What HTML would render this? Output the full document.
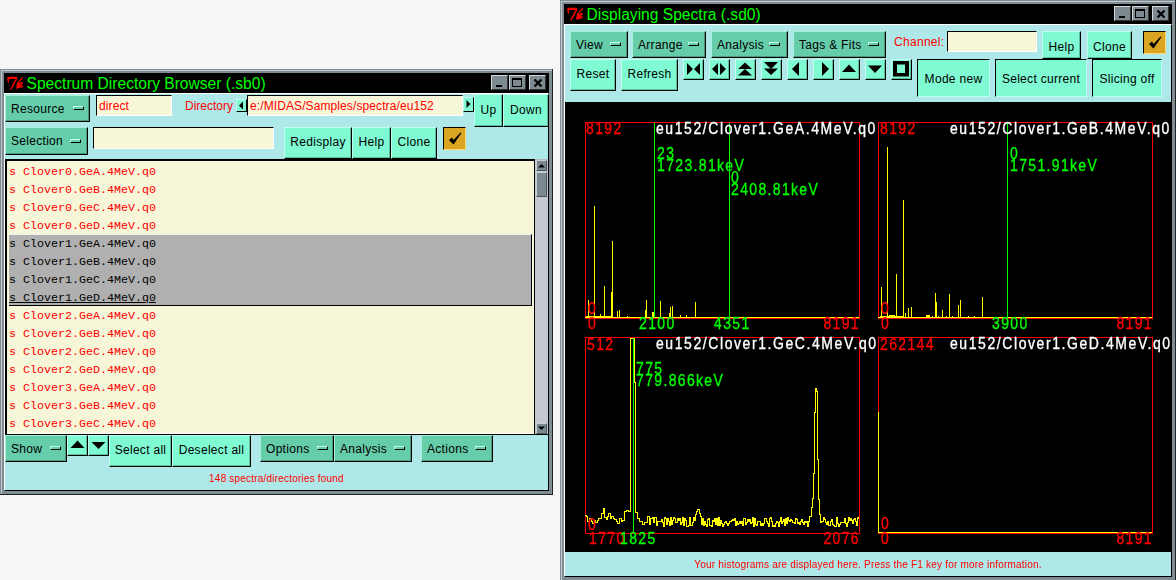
<!DOCTYPE html><html><head><meta charset="utf-8"><style>
html,body{margin:0;padding:0;}
body{width:1176px;height:580px;overflow:hidden;background:#f7f7f7;position:relative;font-family:"Liberation Sans",sans-serif;}
div{position:absolute;}
.t{white-space:nowrap;}
.m{font-family:"Liberation Mono",monospace;}
</style></head><body>
<div style="left:0px;top:69px;width:553px;height:426px;background:#7f8c92;border-right:1px solid #1c2226;border-bottom:1px solid #1c2226;box-sizing:border-box;"></div>
<div style="left:1px;top:70px;width:551px;height:1px;background:#c0cacf"></div>
<div style="left:1px;top:70px;width:1px;height:424px;background:#c0cacf"></div>
<div style="left:4px;top:73px;width:545px;height:20px;background:#000"></div>
<svg style="position:absolute;left:4px;top:73px" width="24" height="18" viewBox="0 0 24 18"><path d="M3.3 5 Q3.5 3.8 5 3.8 L12.2 3.8 Q13.5 4 13.2 5.8 L12.5 7 L11.3 6.5 L11.8 5.9 L6 5.9 Q4.6 6 4.8 8 Q5.5 9.3 4.6 10 Q3.2 9 3.3 5 Z" fill="#f00"/><path d="M11.3 6.6 L12.6 7.2 L7.5 16.5 L6 16.3 Z" fill="#f00"/><path d="M18.3 3.8 L19.2 4.8 L14 10.5 L12.8 10.2 Z" fill="#f00"/><path d="M13 10 L16.5 9.5 Q18 8.5 19 10 Q18.5 11.5 17.5 11.8 Q19 12 19 13.5 Q18.5 15 17 14.8 L15 15 L13 16 L12.2 15 Q12.5 12 13 10 Z" fill="#f00"/><circle cx="17" cy="11.3" r="0.6" fill="#000"/><circle cx="17.3" cy="13.4" r="0.6" fill="#000"/></svg>
<div class="t" style="left:26.5px;top:75px;font-size:15.6px;color:#00ff00;line-height:18px;">Spectrum Directory Browser (.sb0)</div>
<div style="left:491px;top:75px;width:17px;height:15px;background:#7d8a90;border-left:1px solid #d0d8dc;border-top:1px solid #d0d8dc;border-right:1px solid #2e3438;border-bottom:1px solid #2e3438;box-sizing:border-box;"></div>
<div style="left:509px;top:75px;width:17px;height:15px;background:#7d8a90;border-left:1px solid #d0d8dc;border-top:1px solid #d0d8dc;border-right:1px solid #2e3438;border-bottom:1px solid #2e3438;box-sizing:border-box;"></div>
<div style="left:529px;top:75px;width:17px;height:15px;background:#7d8a90;border-left:1px solid #d0d8dc;border-top:1px solid #d0d8dc;border-right:1px solid #2e3438;border-bottom:1px solid #2e3438;box-sizing:border-box;"></div>
<div style="left:496px;top:85px;width:6px;height:2px;background:#000"></div>
<div style="left:512px;top:78px;width:10px;height:9px;border:1.4px solid #000;border-top-width:2.4px;box-sizing:border-box;"></div>
<svg style="position:absolute;left:529px;top:75px" width="17" height="15"><path d="M5.5 4.5 L12.5 11.5 M12.5 4.5 L5.5 11.5" stroke="#000" stroke-width="2.3"/></svg>
<div style="left:4px;top:93px;width:545px;height:398px;background:#aee8e8;border-top:1px solid #fff;border-left:1px solid #fff;border-bottom:1px solid #000;border-right:1px solid #000;box-sizing:border-box;"></div>
<div style="left:5px;top:95px;width:85px;height:27px;background:#66cdaa;border-left:1px solid #a8f0d8;border-top:1px solid #a8f0d8;border-right:1px solid #000;border-bottom:1px solid #000;box-sizing:border-box;box-shadow:inset -1px -1px 0 #4a9a80;"></div>
<div class="t" style="left:11px;top:100.5px;font-size:12px;letter-spacing:0.3px;color:#000;line-height:16px;">Resource</div>
<div style="left:73px;top:106px;width:11px;height:4px;background:#66cdaa;border-left:1px solid #c0ffe8;border-top:1px solid #c0ffe8;border-right:1px solid #000;border-bottom:1px solid #000;box-sizing:border-box;"></div>
<div style="left:96px;top:95px;width:76px;height:21px;background:#f8f6d9;border-left:1px solid #000;border-top:1px solid #000;border-right:1px solid #fff;border-bottom:1px solid #fff;box-sizing:border-box;"></div>
<div class="t" style="left:99px;top:98px;font-size:12px;letter-spacing:0.1px;color:#f00;line-height:16px;">direct</div>
<div class="t" style="left:185px;top:99px;font-size:12px;letter-spacing:0px;color:#f00;line-height:14px;">Directory</div>
<div style="left:236px;top:99px;width:11px;height:13px;background:#7ffad2;border-left:1px solid #c0fff0;border-top:1px solid #c0fff0;border-right:1px solid #000;border-bottom:1px solid #000;box-sizing:border-box;"></div>
<svg style="position:absolute;left:236px;top:99px" width="11" height="13"><path d="M3 6.5 L7 2.5 L7 10.5 Z" fill="#000"/></svg>
<div style="left:247px;top:95px;width:216px;height:21px;background:#f8f6d9;border-left:1px solid #000;border-top:1px solid #000;border-right:1px solid #fff;border-bottom:1px solid #fff;box-sizing:border-box;"></div>
<div class="t" style="left:250px;top:98px;font-size:12px;letter-spacing:0.1px;color:#f00;line-height:16px;">e:/MIDAS/Samples/spectra/eu152</div>
<div style="left:463px;top:97px;width:11px;height:15px;background:#7ffad2;border-left:1px solid #c0fff0;border-top:1px solid #c0fff0;border-right:1px solid #000;border-bottom:1px solid #000;box-sizing:border-box;"></div>
<svg style="position:absolute;left:463px;top:97px" width="11" height="15"><path d="M7.5 7 L3.5 3 L3.5 11 Z" fill="#000"/></svg>
<div style="left:474px;top:94px;width:29px;height:33px;background:#7ffad2;border-left:1px solid #c0fff0;border-top:1px solid #c0fff0;border-right:1px solid #000;border-bottom:1px solid #000;box-sizing:border-box;box-shadow:inset -1px -1px 0 #58c0a0;"></div>
<div class="t" style="left:474px;top:94px;width:29px;height:33px;line-height:32px;text-align:center;font-size:12px;letter-spacing:0.3px;color:#000;">Up</div>
<div style="left:503px;top:94px;width:46px;height:33px;background:#7ffad2;border-left:1px solid #c0fff0;border-top:1px solid #c0fff0;border-right:1px solid #000;border-bottom:1px solid #000;box-sizing:border-box;box-shadow:inset -1px -1px 0 #58c0a0;"></div>
<div class="t" style="left:503px;top:94px;width:46px;height:33px;line-height:32px;text-align:center;font-size:12px;letter-spacing:0.3px;color:#000;">Down</div>
<div style="left:5px;top:127px;width:83px;height:28px;background:#66cdaa;border-left:1px solid #a8f0d8;border-top:1px solid #a8f0d8;border-right:1px solid #000;border-bottom:1px solid #000;box-sizing:border-box;box-shadow:inset -1px -1px 0 #4a9a80;"></div>
<div class="t" style="left:11px;top:132.5px;font-size:12px;letter-spacing:0.3px;color:#000;line-height:16px;">Selection</div>
<div style="left:70px;top:139px;width:11px;height:4px;background:#66cdaa;border-left:1px solid #c0ffe8;border-top:1px solid #c0ffe8;border-right:1px solid #000;border-bottom:1px solid #000;box-sizing:border-box;"></div>
<div style="left:93px;top:127px;width:181px;height:22px;background:#f8f6d9;border-left:1px solid #000;border-top:1px solid #000;border-right:1px solid #fff;border-bottom:1px solid #fff;box-sizing:border-box;"></div>
<div style="left:284px;top:127px;width:68px;height:32px;background:#7ffad2;border-left:1px solid #c0fff0;border-top:1px solid #c0fff0;border-right:1px solid #000;border-bottom:1px solid #000;box-sizing:border-box;box-shadow:inset -1px -1px 0 #58c0a0;"></div>
<div class="t" style="left:284px;top:127px;width:68px;height:32px;line-height:31px;text-align:center;font-size:12px;letter-spacing:0.3px;color:#000;">Redisplay</div>
<div style="left:352px;top:127px;width:39px;height:32px;background:#7ffad2;border-left:1px solid #c0fff0;border-top:1px solid #c0fff0;border-right:1px solid #000;border-bottom:1px solid #000;box-sizing:border-box;box-shadow:inset -1px -1px 0 #58c0a0;"></div>
<div class="t" style="left:352px;top:127px;width:39px;height:32px;line-height:31px;text-align:center;font-size:12px;letter-spacing:0.3px;color:#000;">Help</div>
<div style="left:391px;top:127px;width:46px;height:32px;background:#7ffad2;border-left:1px solid #c0fff0;border-top:1px solid #c0fff0;border-right:1px solid #000;border-bottom:1px solid #000;box-sizing:border-box;box-shadow:inset -1px -1px 0 #58c0a0;"></div>
<div class="t" style="left:391px;top:127px;width:46px;height:32px;line-height:31px;text-align:center;font-size:12px;letter-spacing:0.3px;color:#000;">Clone</div>
<div style="left:443px;top:127px;width:23px;height:23px;background:#daa520;border-left:1px solid #000;border-top:1px solid #000;border-right:1px solid #ffd878;border-bottom:1px solid #ffd878;box-sizing:border-box;"></div>
<svg style="position:absolute;left:443px;top:127px" width="23" height="23"><path d="M6 13 L9 10.5 L10.5 13 L17.5 5.5 L18.5 6 L10.5 17.5 Z" fill="#000"/></svg>
<div style="left:5px;top:159px;width:530px;height:276px;background:#000"></div>
<div style="left:7px;top:161px;width:527px;height:273px;background:#f8f6d9;border-bottom:1px solid #fff;box-sizing:border-box;"></div>
<div style="left:535px;top:434px;width:13px;height:1px;background:#000"></div>
<div style="left:9px;top:234px;width:523px;height:72px;background:#b0b0b0;border-top:1px solid #f0f0f0;border-bottom:1px solid #000;border-right:1px solid #000;box-sizing:border-box;"></div>
<div class="t" style="left:9px;top:164px;font-family:Liberation Mono;font-size:11.67px;color:#f00;line-height:16px;">s Clover0.GeA.4MeV.q0</div>
<div class="t" style="left:9px;top:182px;font-family:Liberation Mono;font-size:11.67px;color:#f00;line-height:16px;">s Clover0.GeB.4MeV.q0</div>
<div class="t" style="left:9px;top:200px;font-family:Liberation Mono;font-size:11.67px;color:#f00;line-height:16px;">s Clover0.GeC.4MeV.q0</div>
<div class="t" style="left:9px;top:218px;font-family:Liberation Mono;font-size:11.67px;color:#f00;line-height:16px;">s Clover0.GeD.4MeV.q0</div>
<div class="t" style="left:9px;top:236px;font-family:Liberation Mono;font-size:11.67px;color:#000;line-height:16px;">s Clover1.GeA.4MeV.q0</div>
<div class="t" style="left:9px;top:254px;font-family:Liberation Mono;font-size:11.67px;color:#000;line-height:16px;">s Clover1.GeB.4MeV.q0</div>
<div class="t" style="left:9px;top:272px;font-family:Liberation Mono;font-size:11.67px;color:#000;line-height:16px;">s Clover1.GeC.4MeV.q0</div>
<div class="t" style="left:9px;top:290px;font-family:Liberation Mono;font-size:11.67px;color:#000;line-height:16px;text-decoration:underline;">s Clover1.GeD.4MeV.q0</div>
<div class="t" style="left:9px;top:308px;font-family:Liberation Mono;font-size:11.67px;color:#f00;line-height:16px;">s Clover2.GeA.4MeV.q0</div>
<div class="t" style="left:9px;top:326px;font-family:Liberation Mono;font-size:11.67px;color:#f00;line-height:16px;">s Clover2.GeB.4MeV.q0</div>
<div class="t" style="left:9px;top:344px;font-family:Liberation Mono;font-size:11.67px;color:#f00;line-height:16px;">s Clover2.GeC.4MeV.q0</div>
<div class="t" style="left:9px;top:362px;font-family:Liberation Mono;font-size:11.67px;color:#f00;line-height:16px;">s Clover2.GeD.4MeV.q0</div>
<div class="t" style="left:9px;top:380px;font-family:Liberation Mono;font-size:11.67px;color:#f00;line-height:16px;">s Clover3.GeA.4MeV.q0</div>
<div class="t" style="left:9px;top:398px;font-family:Liberation Mono;font-size:11.67px;color:#f00;line-height:16px;">s Clover3.GeB.4MeV.q0</div>
<div class="t" style="left:9px;top:416px;font-family:Liberation Mono;font-size:11.67px;color:#f00;line-height:16px;">s Clover3.GeC.4MeV.q0</div>
<div style="left:535px;top:159px;width:13px;height:275px;background:#c4c8cf;border-top:1px solid #b4bcc0;box-sizing:border-box;"></div>
<div style="left:536px;top:160px;width:11px;height:11px;background:#7b8a91;border-left:1px solid #c8d0d4;border-top:1px solid #c8d0d4;border-right:1px solid #4a565c;border-bottom:1px solid #4a565c;box-sizing:border-box;"></div>
<svg style="position:absolute;left:536px;top:160px" width="11" height="11"><path d="M2 7.5 L5.5 4 L9 7.5 Z" fill="#000"/></svg>
<div style="left:536px;top:172px;width:11px;height:25px;background:#7b8a91;border-left:1px solid #c8d0d4;border-top:1px solid #c8d0d4;border-right:1px solid #4a565c;border-bottom:1px solid #4a565c;box-sizing:border-box;"></div>
<div style="left:536px;top:423px;width:11px;height:11px;background:#7b8a91;border-left:1px solid #c8d0d4;border-top:1px solid #c8d0d4;border-right:1px solid #4a565c;border-bottom:1px solid #4a565c;box-sizing:border-box;"></div>
<svg style="position:absolute;left:536px;top:423px" width="11" height="11"><path d="M2 3.5 L5.5 7 L9 3.5 Z" fill="#000"/></svg>
<div style="left:5px;top:435px;width:62px;height:27px;background:#66cdaa;border-left:1px solid #a8f0d8;border-top:1px solid #a8f0d8;border-right:1px solid #000;border-bottom:1px solid #000;box-sizing:border-box;box-shadow:inset -1px -1px 0 #4a9a80;"></div>
<div class="t" style="left:11px;top:440.5px;font-size:12px;letter-spacing:0.3px;color:#000;line-height:16px;">Show</div>
<div style="left:50px;top:446px;width:11px;height:4px;background:#66cdaa;border-left:1px solid #c0ffe8;border-top:1px solid #c0ffe8;border-right:1px solid #000;border-bottom:1px solid #000;box-sizing:border-box;"></div>
<div style="left:67px;top:435px;width:21px;height:21px;background:#7ffad2;border-left:1px solid #c0fff0;border-top:1px solid #c0fff0;border-right:1px solid #000;border-bottom:1px solid #000;box-sizing:border-box;box-shadow:inset -1px -1px 0 #58c0a0;"></div>
<svg style="position:absolute;left:67px;top:435px" width="21" height="21"><path d="M3.5 13 L10.5 5.5 L17.5 13 Z" fill="#000"/></svg>
<div style="left:88px;top:435px;width:21px;height:21px;background:#7ffad2;border-left:1px solid #c0fff0;border-top:1px solid #c0fff0;border-right:1px solid #000;border-bottom:1px solid #000;box-sizing:border-box;box-shadow:inset -1px -1px 0 #58c0a0;"></div>
<svg style="position:absolute;left:88px;top:435px" width="21" height="21"><path d="M3.5 7 L10.5 14 L17.5 7 Z" fill="#000"/></svg>
<div style="left:109px;top:435px;width:63px;height:32px;background:#7ffad2;border-left:1px solid #c0fff0;border-top:1px solid #c0fff0;border-right:1px solid #000;border-bottom:1px solid #000;box-sizing:border-box;box-shadow:inset -1px -1px 0 #58c0a0;"></div>
<div class="t" style="left:109px;top:435px;width:63px;height:32px;line-height:31px;text-align:center;font-size:12px;letter-spacing:0.3px;color:#000;">Select all</div>
<div style="left:172px;top:435px;width:79px;height:32px;background:#7ffad2;border-left:1px solid #c0fff0;border-top:1px solid #c0fff0;border-right:1px solid #000;border-bottom:1px solid #000;box-sizing:border-box;box-shadow:inset -1px -1px 0 #58c0a0;"></div>
<div class="t" style="left:172px;top:435px;width:79px;height:32px;line-height:31px;text-align:center;font-size:12px;letter-spacing:0.3px;color:#000;">Deselect all</div>
<div style="left:260px;top:435px;width:74px;height:27px;background:#66cdaa;border-left:1px solid #a8f0d8;border-top:1px solid #a8f0d8;border-right:1px solid #000;border-bottom:1px solid #000;box-sizing:border-box;box-shadow:inset -1px -1px 0 #4a9a80;"></div>
<div class="t" style="left:266px;top:440.5px;font-size:12px;letter-spacing:0.3px;color:#000;line-height:16px;">Options</div>
<div style="left:317px;top:446px;width:11px;height:4px;background:#66cdaa;border-left:1px solid #c0ffe8;border-top:1px solid #c0ffe8;border-right:1px solid #000;border-bottom:1px solid #000;box-sizing:border-box;"></div>
<div style="left:334px;top:435px;width:78px;height:27px;background:#66cdaa;border-left:1px solid #a8f0d8;border-top:1px solid #a8f0d8;border-right:1px solid #000;border-bottom:1px solid #000;box-sizing:border-box;box-shadow:inset -1px -1px 0 #4a9a80;"></div>
<div class="t" style="left:340px;top:440.5px;font-size:12px;letter-spacing:0.3px;color:#000;line-height:16px;">Analysis</div>
<div style="left:394px;top:446px;width:11px;height:4px;background:#66cdaa;border-left:1px solid #c0ffe8;border-top:1px solid #c0ffe8;border-right:1px solid #000;border-bottom:1px solid #000;box-sizing:border-box;"></div>
<div style="left:421px;top:435px;width:72px;height:27px;background:#66cdaa;border-left:1px solid #a8f0d8;border-top:1px solid #a8f0d8;border-right:1px solid #000;border-bottom:1px solid #000;box-sizing:border-box;box-shadow:inset -1px -1px 0 #4a9a80;"></div>
<div class="t" style="left:427px;top:440.5px;font-size:12px;letter-spacing:0.3px;color:#000;line-height:16px;">Actions</div>
<div style="left:475px;top:446px;width:11px;height:4px;background:#66cdaa;border-left:1px solid #c0ffe8;border-top:1px solid #c0ffe8;border-right:1px solid #000;border-bottom:1px solid #000;box-sizing:border-box;"></div>
<div class="t" style="left:4px;top:472px;width:545px;text-align:center;font-size:10px;color:#f00;letter-spacing:0.2px;line-height:14px;">148 spectra/directories found</div>
<div style="left:560px;top:0px;width:616px;height:581px;background:#7f8c92;border-right:1px solid #1c2226;border-bottom:1px solid #1c2226;box-sizing:border-box;"></div>
<div style="left:561px;top:1px;width:614px;height:1px;background:#c0cacf"></div>
<div style="left:561px;top:1px;width:1px;height:579px;background:#c0cacf"></div>
<div style="left:564px;top:4px;width:608px;height:20px;background:#000"></div>
<svg style="position:absolute;left:564px;top:4px" width="24" height="18" viewBox="0 0 24 18"><path d="M3.3 5 Q3.5 3.8 5 3.8 L12.2 3.8 Q13.5 4 13.2 5.8 L12.5 7 L11.3 6.5 L11.8 5.9 L6 5.9 Q4.6 6 4.8 8 Q5.5 9.3 4.6 10 Q3.2 9 3.3 5 Z" fill="#f00"/><path d="M11.3 6.6 L12.6 7.2 L7.5 16.5 L6 16.3 Z" fill="#f00"/><path d="M18.3 3.8 L19.2 4.8 L14 10.5 L12.8 10.2 Z" fill="#f00"/><path d="M13 10 L16.5 9.5 Q18 8.5 19 10 Q18.5 11.5 17.5 11.8 Q19 12 19 13.5 Q18.5 15 17 14.8 L15 15 L13 16 L12.2 15 Q12.5 12 13 10 Z" fill="#f00"/><circle cx="17" cy="11.3" r="0.6" fill="#000"/><circle cx="17.3" cy="13.4" r="0.6" fill="#000"/></svg>
<div class="t" style="left:586.5px;top:6px;font-size:15.6px;color:#00ff00;line-height:18px;">Displaying Spectra (.sd0)</div>
<div style="left:1114px;top:6px;width:17px;height:15px;background:#7d8a90;border-left:1px solid #d0d8dc;border-top:1px solid #d0d8dc;border-right:1px solid #2e3438;border-bottom:1px solid #2e3438;box-sizing:border-box;"></div>
<div style="left:1132px;top:6px;width:17px;height:15px;background:#7d8a90;border-left:1px solid #d0d8dc;border-top:1px solid #d0d8dc;border-right:1px solid #2e3438;border-bottom:1px solid #2e3438;box-sizing:border-box;"></div>
<div style="left:1152px;top:6px;width:17px;height:15px;background:#7d8a90;border-left:1px solid #d0d8dc;border-top:1px solid #d0d8dc;border-right:1px solid #2e3438;border-bottom:1px solid #2e3438;box-sizing:border-box;"></div>
<div style="left:1119px;top:16px;width:6px;height:2px;background:#000"></div>
<div style="left:1135px;top:9px;width:10px;height:9px;border:1.4px solid #000;border-top-width:2.4px;box-sizing:border-box;"></div>
<svg style="position:absolute;left:1152px;top:6px" width="17" height="15"><path d="M5.5 4.5 L12.5 11.5 M12.5 4.5 L5.5 11.5" stroke="#000" stroke-width="2.3"/></svg>
<div style="left:564px;top:24px;width:608px;height:553px;background:#aee8e8;border-top:1px solid #fff;border-left:1px solid #fff;border-bottom:1px solid #000;border-right:1px solid #000;box-sizing:border-box;"></div>
<div style="left:570px;top:31px;width:58px;height:27px;background:#66cdaa;border-left:1px solid #a8f0d8;border-top:1px solid #a8f0d8;border-right:1px solid #000;border-bottom:1px solid #000;box-sizing:border-box;box-shadow:inset -1px -1px 0 #4a9a80;"></div>
<div class="t" style="left:576px;top:36.5px;font-size:12px;letter-spacing:0.3px;color:#000;line-height:16px;">View</div>
<div style="left:610px;top:42px;width:11px;height:4px;background:#66cdaa;border-left:1px solid #c0ffe8;border-top:1px solid #c0ffe8;border-right:1px solid #000;border-bottom:1px solid #000;box-sizing:border-box;"></div>
<div style="left:632px;top:31px;width:74px;height:27px;background:#66cdaa;border-left:1px solid #a8f0d8;border-top:1px solid #a8f0d8;border-right:1px solid #000;border-bottom:1px solid #000;box-sizing:border-box;box-shadow:inset -1px -1px 0 #4a9a80;"></div>
<div class="t" style="left:638px;top:36.5px;font-size:12px;letter-spacing:0.3px;color:#000;line-height:16px;">Arrange</div>
<div style="left:688px;top:42px;width:11px;height:4px;background:#66cdaa;border-left:1px solid #c0ffe8;border-top:1px solid #c0ffe8;border-right:1px solid #000;border-bottom:1px solid #000;box-sizing:border-box;"></div>
<div style="left:711px;top:31px;width:77px;height:27px;background:#66cdaa;border-left:1px solid #a8f0d8;border-top:1px solid #a8f0d8;border-right:1px solid #000;border-bottom:1px solid #000;box-sizing:border-box;box-shadow:inset -1px -1px 0 #4a9a80;"></div>
<div class="t" style="left:717px;top:36.5px;font-size:12px;letter-spacing:0.3px;color:#000;line-height:16px;">Analysis</div>
<div style="left:769px;top:42px;width:11px;height:4px;background:#66cdaa;border-left:1px solid #c0ffe8;border-top:1px solid #c0ffe8;border-right:1px solid #000;border-bottom:1px solid #000;box-sizing:border-box;"></div>
<div style="left:793px;top:31px;width:93px;height:27px;background:#66cdaa;border-left:1px solid #a8f0d8;border-top:1px solid #a8f0d8;border-right:1px solid #000;border-bottom:1px solid #000;box-sizing:border-box;box-shadow:inset -1px -1px 0 #4a9a80;"></div>
<div class="t" style="left:799px;top:36.5px;font-size:12px;letter-spacing:0.3px;color:#000;line-height:16px;">Tags &amp; Fits</div>
<div style="left:868px;top:42px;width:11px;height:4px;background:#66cdaa;border-left:1px solid #c0ffe8;border-top:1px solid #c0ffe8;border-right:1px solid #000;border-bottom:1px solid #000;box-sizing:border-box;"></div>
<div class="t" style="left:894px;top:34px;font-size:12px;letter-spacing:0.3px;color:#f00;line-height:16px;">Channel:</div>
<div style="left:947px;top:31px;width:90px;height:21px;background:#f8f6d9;border-left:1px solid #000;border-top:1px solid #000;border-right:1px solid #fff;border-bottom:1px solid #fff;box-sizing:border-box;"></div>
<div style="left:1042px;top:31px;width:39px;height:28px;background:#7ffad2;border-left:1px solid #c0fff0;border-top:1px solid #c0fff0;border-right:1px solid #000;border-bottom:1px solid #000;box-sizing:border-box;box-shadow:inset -1px -1px 0 #58c0a0;"></div>
<div class="t" style="left:1042px;top:34px;width:39px;height:28px;line-height:27px;text-align:center;font-size:12px;letter-spacing:0.3px;color:#000;">Help</div>
<div style="left:1087px;top:31px;width:45px;height:28px;background:#7ffad2;border-left:1px solid #c0fff0;border-top:1px solid #c0fff0;border-right:1px solid #000;border-bottom:1px solid #000;box-sizing:border-box;box-shadow:inset -1px -1px 0 #58c0a0;"></div>
<div class="t" style="left:1087px;top:34px;width:45px;height:28px;line-height:27px;text-align:center;font-size:12px;letter-spacing:0.3px;color:#000;">Clone</div>
<div style="left:1143px;top:31px;width:23px;height:23px;background:#daa520;border-left:1px solid #000;border-top:1px solid #000;border-right:1px solid #ffd878;border-bottom:1px solid #ffd878;box-sizing:border-box;"></div>
<svg style="position:absolute;left:1143px;top:31px" width="23" height="23"><path d="M6 13 L9 10.5 L10.5 13 L17.5 5.5 L18.5 6 L10.5 17.5 Z" fill="#000"/></svg>
<div style="left:570px;top:59px;width:46px;height:32px;background:#7ffad2;border-left:1px solid #c0fff0;border-top:1px solid #c0fff0;border-right:1px solid #000;border-bottom:1px solid #000;box-sizing:border-box;box-shadow:inset -1px -1px 0 #58c0a0;"></div>
<div class="t" style="left:570px;top:59px;width:46px;height:32px;line-height:31px;text-align:center;font-size:12px;letter-spacing:0.3px;color:#000;">Reset</div>
<div style="left:621px;top:59px;width:57px;height:32px;background:#7ffad2;border-left:1px solid #c0fff0;border-top:1px solid #c0fff0;border-right:1px solid #000;border-bottom:1px solid #000;box-sizing:border-box;box-shadow:inset -1px -1px 0 #58c0a0;"></div>
<div class="t" style="left:621px;top:59px;width:57px;height:32px;line-height:31px;text-align:center;font-size:12px;letter-spacing:0.3px;color:#000;">Refresh</div>
<div style="left:683px;top:59px;width:21px;height:21px;background:#7ffad2;border-left:1px solid #c0fff0;border-top:1px solid #c0fff0;border-right:1px solid #000;border-bottom:1px solid #000;box-sizing:border-box;box-shadow:inset -1px -1px 0 #58c0a0;"></div>
<svg style="position:absolute;left:683px;top:59px" width="21" height="21"><path d="M4 4 L10 10 L4 16 Z M17 4 L11 10 L17 16 Z" fill="#000" fill-rule="evenodd"/></svg>
<div style="left:709px;top:59px;width:21px;height:21px;background:#7ffad2;border-left:1px solid #c0fff0;border-top:1px solid #c0fff0;border-right:1px solid #000;border-bottom:1px solid #000;box-sizing:border-box;box-shadow:inset -1px -1px 0 #58c0a0;"></div>
<svg style="position:absolute;left:709px;top:59px" width="21" height="21"><path d="M3 10 L9 4 L9 16 Z M11 4 L17 10 L11 16 Z" fill="#000" fill-rule="evenodd"/></svg>
<div style="left:735px;top:59px;width:21px;height:21px;background:#7ffad2;border-left:1px solid #c0fff0;border-top:1px solid #c0fff0;border-right:1px solid #000;border-bottom:1px solid #000;box-sizing:border-box;box-shadow:inset -1px -1px 0 #58c0a0;"></div>
<svg style="position:absolute;left:735px;top:59px" width="21" height="21"><path d="M3 10 L10 3.5 L17 10 Z M3 16.5 L10 10 L17 16.5 Z" fill="#000" fill-rule="evenodd"/></svg>
<div style="left:761px;top:59px;width:21px;height:21px;background:#7ffad2;border-left:1px solid #c0fff0;border-top:1px solid #c0fff0;border-right:1px solid #000;border-bottom:1px solid #000;box-sizing:border-box;box-shadow:inset -1px -1px 0 #58c0a0;"></div>
<svg style="position:absolute;left:761px;top:59px" width="21" height="21"><path d="M3 3 L17 3 L10 10 Z M3 9.5 L17 9.5 L10 16 Z" fill="#000" fill-rule="evenodd"/></svg>
<div style="left:787px;top:59px;width:21px;height:21px;background:#7ffad2;border-left:1px solid #c0fff0;border-top:1px solid #c0fff0;border-right:1px solid #000;border-bottom:1px solid #000;box-sizing:border-box;box-shadow:inset -1px -1px 0 #58c0a0;"></div>
<svg style="position:absolute;left:787px;top:59px" width="21" height="21"><path d="M5 10 L12 3 L12 17 Z" fill="#000" fill-rule="evenodd"/></svg>
<div style="left:813px;top:59px;width:21px;height:21px;background:#7ffad2;border-left:1px solid #c0fff0;border-top:1px solid #c0fff0;border-right:1px solid #000;border-bottom:1px solid #000;box-sizing:border-box;box-shadow:inset -1px -1px 0 #58c0a0;"></div>
<svg style="position:absolute;left:813px;top:59px" width="21" height="21"><path d="M9 3 L16 10 L9 17 Z" fill="#000" fill-rule="evenodd"/></svg>
<div style="left:839px;top:59px;width:21px;height:21px;background:#7ffad2;border-left:1px solid #c0fff0;border-top:1px solid #c0fff0;border-right:1px solid #000;border-bottom:1px solid #000;box-sizing:border-box;box-shadow:inset -1px -1px 0 #58c0a0;"></div>
<svg style="position:absolute;left:839px;top:59px" width="21" height="21"><path d="M3 13 L10 5.5 L17 13 Z" fill="#000" fill-rule="evenodd"/></svg>
<div style="left:865px;top:59px;width:21px;height:21px;background:#7ffad2;border-left:1px solid #c0fff0;border-top:1px solid #c0fff0;border-right:1px solid #000;border-bottom:1px solid #000;box-sizing:border-box;box-shadow:inset -1px -1px 0 #58c0a0;"></div>
<svg style="position:absolute;left:865px;top:59px" width="21" height="21"><path d="M3 6.5 L17 6.5 L10 14 Z" fill="#000" fill-rule="evenodd"/></svg>
<div style="left:891px;top:59px;width:21px;height:21px;background:#7ffad2;border-left:1px solid #c0fff0;border-top:1px solid #c0fff0;border-right:1px solid #000;border-bottom:1px solid #000;box-sizing:border-box;box-shadow:inset -1px -1px 0 #58c0a0;"></div>
<svg style="position:absolute;left:891px;top:59px" width="21" height="21"><path d="M2 2 L18 2 L18 17.5 L2 17.5 Z M6 5.5 L6 14 L14 14 L14 5.5 Z" fill="#000" fill-rule="evenodd"/></svg>
<div style="left:917px;top:59px;width:73px;height:38px;background:#7ffad2;border-left:1px solid #000;border-top:1px solid #000;border-right:1px solid #c0fff0;border-bottom:1px solid #c0fff0;box-sizing:border-box;"></div>
<div class="t" style="left:917px;top:59px;width:73px;height:38px;line-height:40px;text-align:center;font-size:12px;letter-spacing:0.3px;color:#000;">Mode new</div>
<div style="left:995px;top:59px;width:92px;height:38px;background:#7ffad2;border-left:1px solid #000;border-top:1px solid #000;border-right:1px solid #c0fff0;border-bottom:1px solid #c0fff0;box-sizing:border-box;"></div>
<div class="t" style="left:995px;top:59px;width:92px;height:38px;line-height:40px;text-align:center;font-size:12px;letter-spacing:0.3px;color:#000;">Select current</div>
<div style="left:1092px;top:59px;width:70px;height:38px;background:#7ffad2;border-left:1px solid #000;border-top:1px solid #000;border-right:1px solid #c0fff0;border-bottom:1px solid #c0fff0;box-sizing:border-box;"></div>
<div class="t" style="left:1092px;top:59px;width:70px;height:38px;line-height:40px;text-align:center;font-size:12px;letter-spacing:0.3px;color:#000;">Slicing off</div>
<div style="left:565px;top:102px;width:607px;height:450px;background:#000"></div>
<svg style="position:absolute;left:0;top:0;will-change:transform" width="1176" height="580"><style>.d{font-family:"Liberation Sans";font-size:14px;letter-spacing:1.35px;stroke-width:0.3px;} .ti{font-family:"Liberation Sans";font-size:14px;letter-spacing:1.58px;stroke:#fff;stroke-width:0.3px;}</style>
<rect x="585" y="122" width="275" height="1" fill="#ff0000"/>
<rect x="585" y="318" width="275" height="1" fill="#ff0000"/>
<rect x="585" y="122" width="1" height="197" fill="#ff0000"/>
<rect x="859" y="122" width="1" height="197" fill="#ff0000"/>
<rect x="585" y="317" width="274" height="1" fill="#ffff00"/>
<rect x="586" y="316" width="27" height="1" fill="#ffff00"/>
<rect x="588" y="300" width="1" height="18" fill="#ffff00"/>
<rect x="594" y="206" width="1" height="112" fill="#ffff00"/>
<rect x="604" y="286" width="1" height="32" fill="#ffff00"/>
<rect x="611" y="292" width="1" height="26" fill="#ffff00"/>
<rect x="612" y="241" width="1" height="77" fill="#ffff00"/>
<rect x="617" y="311" width="1" height="7" fill="#ffff00"/>
<rect x="619" y="310" width="1" height="8" fill="#ffff00"/>
<rect x="645" y="310" width="1" height="8" fill="#ffff00"/>
<rect x="646" y="300" width="1" height="18" fill="#ffff00"/>
<rect x="652" y="312" width="1" height="6" fill="#ffff00"/>
<rect x="653" y="312" width="1" height="6" fill="#ffff00"/>
<rect x="660" y="301" width="1" height="17" fill="#ffff00"/>
<rect x="669" y="313" width="1" height="5" fill="#ffff00"/>
<rect x="670" y="307" width="1" height="11" fill="#ffff00"/>
<rect x="672" y="306" width="1" height="12" fill="#ffff00"/>
<rect x="695" y="302" width="1" height="16" fill="#ffff00"/>
<rect x="600" y="314" width="1" height="4" fill="#ffff00"/>
<rect x="680" y="315" width="1" height="3" fill="#ffff00"/>
<rect x="686" y="315" width="1" height="3" fill="#ffff00"/>
<rect x="627" y="316" width="1" height="2" fill="#ffff00"/>
<rect x="654" y="123" width="1" height="195" fill="#00ff00"/>
<rect x="729" y="123" width="1" height="195" fill="#00ff00"/>
<text transform="translate(586,134) scale(1,1.2)" fill="#ff0000" stroke="#ff0000" class="d" text-anchor="start">8192</text>
<text transform="translate(656,134) scale(1,1.14)" fill="#fff" class="ti">eu152/Clover1.GeA.4MeV.q0</text>
<text transform="translate(657,159) scale(1,1.2)" fill="#00ff00" stroke="#00ff00" class="d" text-anchor="start">23</text>
<text transform="translate(657,171) scale(1,1.2)" fill="#00ff00" stroke="#00ff00" class="d" text-anchor="start">1723.81keV</text>
<text transform="translate(731,183) scale(1,1.2)" fill="#00ff00" stroke="#00ff00" class="d" text-anchor="start">0</text>
<text transform="translate(731,195) scale(1,1.2)" fill="#00ff00" stroke="#00ff00" class="d" text-anchor="start">2408.81keV</text>
<text transform="translate(588,314) scale(1,1.2)" fill="#ff0000" stroke="#ff0000" class="d" text-anchor="start">0</text>
<text transform="translate(588,329) scale(1,1.2)" fill="#ff0000" stroke="#ff0000" class="d" text-anchor="start">0</text>
<text transform="translate(639,329) scale(1,1.2)" fill="#00ff00" stroke="#00ff00" class="d" text-anchor="start">2100</text>
<text transform="translate(714,329) scale(1,1.2)" fill="#00ff00" stroke="#00ff00" class="d" text-anchor="start">4351</text>
<text transform="translate(860,329) scale(1,1.2)" fill="#ff0000" stroke="#ff0000" class="d" text-anchor="end">8191</text>
<rect x="878" y="122" width="275" height="1" fill="#ff0000"/>
<rect x="878" y="318" width="275" height="1" fill="#ff0000"/>
<rect x="878" y="122" width="1" height="197" fill="#ff0000"/>
<rect x="1152" y="122" width="1" height="197" fill="#ff0000"/>
<rect x="878" y="317" width="274" height="1" fill="#ffff00"/>
<rect x="880" y="316" width="24" height="1" fill="#ffff00"/>
<rect x="889" y="315" width="6" height="1" fill="#ffff00"/>
<rect x="881" y="287" width="1" height="31" fill="#ffff00"/>
<rect x="887" y="147" width="1" height="171" fill="#ffff00"/>
<rect x="896" y="274" width="1" height="44" fill="#ffff00"/>
<rect x="903" y="200" width="1" height="118" fill="#ffff00"/>
<rect x="905" y="313" width="1" height="5" fill="#ffff00"/>
<rect x="908" y="308" width="1" height="10" fill="#ffff00"/>
<rect x="911" y="307" width="1" height="11" fill="#ffff00"/>
<rect x="935" y="293" width="1" height="25" fill="#ffff00"/>
<rect x="936" y="302" width="1" height="16" fill="#ffff00"/>
<rect x="942" y="310" width="1" height="8" fill="#ffff00"/>
<rect x="949" y="294" width="1" height="24" fill="#ffff00"/>
<rect x="958" y="305" width="1" height="13" fill="#ffff00"/>
<rect x="960" y="300" width="1" height="18" fill="#ffff00"/>
<rect x="982" y="297" width="1" height="21" fill="#ffff00"/>
<rect x="926" y="315" width="1" height="3" fill="#ffff00"/>
<rect x="927" y="315" width="1" height="3" fill="#ffff00"/>
<rect x="928" y="315" width="1" height="3" fill="#ffff00"/>
<rect x="929" y="315" width="1" height="3" fill="#ffff00"/>
<rect x="932" y="316" width="1" height="2" fill="#ffff00"/>
<rect x="938" y="316" width="1" height="2" fill="#ffff00"/>
<rect x="946" y="316" width="1" height="2" fill="#ffff00"/>
<rect x="952" y="316" width="1" height="2" fill="#ffff00"/>
<rect x="968" y="316" width="1" height="2" fill="#ffff00"/>
<rect x="974" y="316" width="1" height="2" fill="#ffff00"/>
<rect x="1007" y="123" width="1" height="195" fill="#00ff00"/>
<text transform="translate(880,134) scale(1,1.2)" fill="#ff0000" stroke="#ff0000" class="d" text-anchor="start">8192</text>
<text transform="translate(950,134) scale(1,1.14)" fill="#fff" class="ti">eu152/Clover1.GeB.4MeV.q0</text>
<text transform="translate(1010,159) scale(1,1.2)" fill="#00ff00" stroke="#00ff00" class="d" text-anchor="start">0</text>
<text transform="translate(1010,171) scale(1,1.2)" fill="#00ff00" stroke="#00ff00" class="d" text-anchor="start">1751.91keV</text>
<text transform="translate(881,314) scale(1,1.2)" fill="#ff0000" stroke="#ff0000" class="d" text-anchor="start">0</text>
<text transform="translate(881,329) scale(1,1.2)" fill="#ff0000" stroke="#ff0000" class="d" text-anchor="start">0</text>
<text transform="translate(992,329) scale(1,1.2)" fill="#00ff00" stroke="#00ff00" class="d" text-anchor="start">3900</text>
<text transform="translate(1153,329) scale(1,1.2)" fill="#ff0000" stroke="#ff0000" class="d" text-anchor="end">8191</text>
<rect x="585" y="337" width="275" height="1" fill="#ff0000"/>
<rect x="585" y="533" width="275" height="1" fill="#ff0000"/>
<rect x="585" y="337" width="1" height="197" fill="#ff0000"/>
<rect x="859" y="337" width="1" height="197" fill="#ff0000"/>
<rect x="585" y="515" width="1" height="1" fill="#ffff00"/>
<rect x="586" y="515" width="1" height="2" fill="#ffff00"/>
<rect x="587" y="516" width="1" height="6" fill="#ffff00"/>
<rect x="588" y="521" width="1" height="1" fill="#ffff00"/>
<rect x="589" y="518" width="1" height="4" fill="#ffff00"/>
<rect x="590" y="518" width="1" height="1" fill="#ffff00"/>
<rect x="591" y="518" width="1" height="4" fill="#ffff00"/>
<rect x="592" y="521" width="1" height="3" fill="#ffff00"/>
<rect x="593" y="523" width="1" height="1" fill="#ffff00"/>
<rect x="594" y="520" width="1" height="4" fill="#ffff00"/>
<rect x="595" y="520" width="1" height="3" fill="#ffff00"/>
<rect x="596" y="522" width="1" height="1" fill="#ffff00"/>
<rect x="597" y="520" width="1" height="3" fill="#ffff00"/>
<rect x="598" y="518" width="1" height="3" fill="#ffff00"/>
<rect x="599" y="518" width="1" height="1" fill="#ffff00"/>
<rect x="600" y="518" width="1" height="1" fill="#ffff00"/>
<rect x="601" y="513" width="1" height="6" fill="#ffff00"/>
<rect x="602" y="513" width="1" height="1" fill="#ffff00"/>
<rect x="603" y="508" width="1" height="6" fill="#ffff00"/>
<rect x="604" y="508" width="1" height="10" fill="#ffff00"/>
<rect x="605" y="517" width="1" height="1" fill="#ffff00"/>
<rect x="606" y="517" width="1" height="3" fill="#ffff00"/>
<rect x="607" y="516" width="1" height="4" fill="#ffff00"/>
<rect x="608" y="513" width="1" height="4" fill="#ffff00"/>
<rect x="609" y="513" width="1" height="1" fill="#ffff00"/>
<rect x="610" y="513" width="1" height="6" fill="#ffff00"/>
<rect x="611" y="516" width="1" height="3" fill="#ffff00"/>
<rect x="612" y="516" width="1" height="1" fill="#ffff00"/>
<rect x="613" y="516" width="1" height="3" fill="#ffff00"/>
<rect x="614" y="518" width="1" height="2" fill="#ffff00"/>
<rect x="615" y="519" width="1" height="1" fill="#ffff00"/>
<rect x="616" y="519" width="1" height="3" fill="#ffff00"/>
<rect x="617" y="521" width="1" height="3" fill="#ffff00"/>
<rect x="618" y="523" width="1" height="1" fill="#ffff00"/>
<rect x="619" y="518" width="1" height="6" fill="#ffff00"/>
<rect x="620" y="518" width="1" height="1" fill="#ffff00"/>
<rect x="621" y="518" width="1" height="4" fill="#ffff00"/>
<rect x="622" y="520" width="1" height="2" fill="#ffff00"/>
<rect x="623" y="520" width="1" height="1" fill="#ffff00"/>
<rect x="624" y="511" width="1" height="10" fill="#ffff00"/>
<rect x="625" y="511" width="1" height="1" fill="#ffff00"/>
<rect x="626" y="510" width="1" height="2" fill="#ffff00"/>
<rect x="627" y="510" width="1" height="1" fill="#ffff00"/>
<rect x="628" y="510" width="1" height="2" fill="#ffff00"/>
<rect x="629" y="511" width="1" height="1" fill="#ffff00"/>
<rect x="630" y="338" width="1" height="174" fill="#ffff00"/>
<rect x="631" y="338" width="1" height="1" fill="#ffff00"/>
<rect x="632" y="338" width="1" height="1" fill="#ffff00"/>
<rect x="633" y="338" width="1" height="1" fill="#ffff00"/>
<rect x="634" y="338" width="1" height="45" fill="#ffff00"/>
<rect x="635" y="382" width="1" height="131" fill="#ffff00"/>
<rect x="636" y="512" width="1" height="1" fill="#ffff00"/>
<rect x="637" y="512" width="1" height="7" fill="#ffff00"/>
<rect x="638" y="518" width="1" height="1" fill="#ffff00"/>
<rect x="639" y="518" width="1" height="4" fill="#ffff00"/>
<rect x="640" y="521" width="1" height="1" fill="#ffff00"/>
<rect x="641" y="521" width="1" height="1" fill="#ffff00"/>
<rect x="642" y="521" width="1" height="4" fill="#ffff00"/>
<rect x="643" y="524" width="1" height="1" fill="#ffff00"/>
<rect x="644" y="522" width="1" height="3" fill="#ffff00"/>
<rect x="645" y="522" width="1" height="1" fill="#ffff00"/>
<rect x="646" y="522" width="1" height="1" fill="#ffff00"/>
<rect x="647" y="516" width="1" height="7" fill="#ffff00"/>
<rect x="648" y="516" width="1" height="1" fill="#ffff00"/>
<rect x="649" y="516" width="1" height="9" fill="#ffff00"/>
<rect x="650" y="518" width="1" height="7" fill="#ffff00"/>
<rect x="651" y="518" width="1" height="1" fill="#ffff00"/>
<rect x="652" y="517" width="1" height="2" fill="#ffff00"/>
<rect x="653" y="517" width="1" height="6" fill="#ffff00"/>
<rect x="654" y="517" width="1" height="6" fill="#ffff00"/>
<rect x="655" y="517" width="1" height="1" fill="#ffff00"/>
<rect x="656" y="517" width="1" height="9" fill="#ffff00"/>
<rect x="657" y="521" width="1" height="5" fill="#ffff00"/>
<rect x="658" y="521" width="1" height="1" fill="#ffff00"/>
<rect x="659" y="521" width="1" height="1" fill="#ffff00"/>
<rect x="660" y="521" width="1" height="1" fill="#ffff00"/>
<rect x="661" y="519" width="1" height="3" fill="#ffff00"/>
<rect x="662" y="519" width="1" height="4" fill="#ffff00"/>
<rect x="663" y="522" width="1" height="5" fill="#ffff00"/>
<rect x="664" y="517" width="1" height="10" fill="#ffff00"/>
<rect x="665" y="517" width="1" height="2" fill="#ffff00"/>
<rect x="666" y="518" width="1" height="7" fill="#ffff00"/>
<rect x="667" y="518" width="1" height="7" fill="#ffff00"/>
<rect x="668" y="518" width="1" height="4" fill="#ffff00"/>
<rect x="669" y="521" width="1" height="5" fill="#ffff00"/>
<rect x="670" y="517" width="1" height="9" fill="#ffff00"/>
<rect x="671" y="517" width="1" height="8" fill="#ffff00"/>
<rect x="672" y="520" width="1" height="5" fill="#ffff00"/>
<rect x="673" y="517" width="1" height="4" fill="#ffff00"/>
<rect x="674" y="517" width="1" height="2" fill="#ffff00"/>
<rect x="675" y="518" width="1" height="5" fill="#ffff00"/>
<rect x="676" y="522" width="1" height="1" fill="#ffff00"/>
<rect x="677" y="518" width="1" height="5" fill="#ffff00"/>
<rect x="678" y="518" width="1" height="3" fill="#ffff00"/>
<rect x="679" y="518" width="1" height="3" fill="#ffff00"/>
<rect x="680" y="518" width="1" height="7" fill="#ffff00"/>
<rect x="681" y="522" width="1" height="3" fill="#ffff00"/>
<rect x="682" y="517" width="1" height="6" fill="#ffff00"/>
<rect x="683" y="517" width="1" height="9" fill="#ffff00"/>
<rect x="684" y="518" width="1" height="8" fill="#ffff00"/>
<rect x="685" y="518" width="1" height="3" fill="#ffff00"/>
<rect x="686" y="520" width="1" height="7" fill="#ffff00"/>
<rect x="687" y="526" width="1" height="1" fill="#ffff00"/>
<rect x="688" y="525" width="1" height="2" fill="#ffff00"/>
<rect x="689" y="517" width="1" height="9" fill="#ffff00"/>
<rect x="690" y="517" width="1" height="9" fill="#ffff00"/>
<rect x="691" y="525" width="1" height="1" fill="#ffff00"/>
<rect x="692" y="522" width="1" height="4" fill="#ffff00"/>
<rect x="693" y="517" width="1" height="6" fill="#ffff00"/>
<rect x="694" y="517" width="1" height="4" fill="#ffff00"/>
<rect x="695" y="514" width="1" height="7" fill="#ffff00"/>
<rect x="696" y="511" width="1" height="4" fill="#ffff00"/>
<rect x="697" y="509" width="1" height="3" fill="#ffff00"/>
<rect x="698" y="509" width="1" height="1" fill="#ffff00"/>
<rect x="699" y="509" width="1" height="5" fill="#ffff00"/>
<rect x="700" y="513" width="1" height="4" fill="#ffff00"/>
<rect x="701" y="516" width="1" height="9" fill="#ffff00"/>
<rect x="702" y="518" width="1" height="7" fill="#ffff00"/>
<rect x="703" y="518" width="1" height="8" fill="#ffff00"/>
<rect x="704" y="521" width="1" height="5" fill="#ffff00"/>
<rect x="705" y="521" width="1" height="4" fill="#ffff00"/>
<rect x="706" y="524" width="1" height="3" fill="#ffff00"/>
<rect x="707" y="519" width="1" height="8" fill="#ffff00"/>
<rect x="708" y="518" width="1" height="2" fill="#ffff00"/>
<rect x="709" y="518" width="1" height="8" fill="#ffff00"/>
<rect x="710" y="525" width="1" height="1" fill="#ffff00"/>
<rect x="711" y="525" width="1" height="2" fill="#ffff00"/>
<rect x="712" y="520" width="1" height="7" fill="#ffff00"/>
<rect x="713" y="520" width="1" height="2" fill="#ffff00"/>
<rect x="714" y="518" width="1" height="4" fill="#ffff00"/>
<rect x="715" y="518" width="1" height="7" fill="#ffff00"/>
<rect x="716" y="518" width="1" height="7" fill="#ffff00"/>
<rect x="717" y="518" width="1" height="8" fill="#ffff00"/>
<rect x="718" y="517" width="1" height="9" fill="#ffff00"/>
<rect x="719" y="517" width="1" height="9" fill="#ffff00"/>
<rect x="720" y="520" width="1" height="6" fill="#ffff00"/>
<rect x="721" y="520" width="1" height="4" fill="#ffff00"/>
<rect x="722" y="523" width="1" height="4" fill="#ffff00"/>
<rect x="723" y="524" width="1" height="3" fill="#ffff00"/>
<rect x="724" y="522" width="1" height="3" fill="#ffff00"/>
<rect x="725" y="521" width="1" height="2" fill="#ffff00"/>
<rect x="726" y="521" width="1" height="3" fill="#ffff00"/>
<rect x="727" y="523" width="1" height="3" fill="#ffff00"/>
<rect x="728" y="523" width="1" height="3" fill="#ffff00"/>
<rect x="729" y="521" width="1" height="3" fill="#ffff00"/>
<rect x="730" y="521" width="1" height="1" fill="#ffff00"/>
<rect x="731" y="520" width="1" height="2" fill="#ffff00"/>
<rect x="732" y="519" width="1" height="2" fill="#ffff00"/>
<rect x="733" y="519" width="1" height="2" fill="#ffff00"/>
<rect x="734" y="518" width="1" height="3" fill="#ffff00"/>
<rect x="735" y="518" width="1" height="8" fill="#ffff00"/>
<rect x="736" y="521" width="1" height="5" fill="#ffff00"/>
<rect x="737" y="521" width="1" height="4" fill="#ffff00"/>
<rect x="738" y="523" width="1" height="2" fill="#ffff00"/>
<rect x="739" y="521" width="1" height="3" fill="#ffff00"/>
<rect x="740" y="521" width="1" height="3" fill="#ffff00"/>
<rect x="741" y="521" width="1" height="3" fill="#ffff00"/>
<rect x="742" y="521" width="1" height="5" fill="#ffff00"/>
<rect x="743" y="518" width="1" height="8" fill="#ffff00"/>
<rect x="744" y="518" width="1" height="1" fill="#ffff00"/>
<rect x="745" y="518" width="1" height="7" fill="#ffff00"/>
<rect x="746" y="522" width="1" height="3" fill="#ffff00"/>
<rect x="747" y="519" width="1" height="4" fill="#ffff00"/>
<rect x="748" y="519" width="1" height="3" fill="#ffff00"/>
<rect x="749" y="519" width="1" height="3" fill="#ffff00"/>
<rect x="750" y="519" width="1" height="5" fill="#ffff00"/>
<rect x="751" y="522" width="1" height="2" fill="#ffff00"/>
<rect x="752" y="517" width="1" height="6" fill="#ffff00"/>
<rect x="753" y="517" width="1" height="10" fill="#ffff00"/>
<rect x="754" y="518" width="1" height="9" fill="#ffff00"/>
<rect x="755" y="518" width="1" height="7" fill="#ffff00"/>
<rect x="756" y="524" width="1" height="2" fill="#ffff00"/>
<rect x="757" y="521" width="1" height="5" fill="#ffff00"/>
<rect x="758" y="521" width="1" height="1" fill="#ffff00"/>
<rect x="759" y="521" width="1" height="1" fill="#ffff00"/>
<rect x="760" y="521" width="1" height="5" fill="#ffff00"/>
<rect x="761" y="523" width="1" height="3" fill="#ffff00"/>
<rect x="762" y="523" width="1" height="3" fill="#ffff00"/>
<rect x="763" y="523" width="1" height="3" fill="#ffff00"/>
<rect x="764" y="518" width="1" height="6" fill="#ffff00"/>
<rect x="765" y="518" width="1" height="1" fill="#ffff00"/>
<rect x="766" y="518" width="1" height="4" fill="#ffff00"/>
<rect x="767" y="521" width="1" height="3" fill="#ffff00"/>
<rect x="768" y="523" width="1" height="4" fill="#ffff00"/>
<rect x="769" y="518" width="1" height="9" fill="#ffff00"/>
<rect x="770" y="517" width="1" height="2" fill="#ffff00"/>
<rect x="771" y="517" width="1" height="5" fill="#ffff00"/>
<rect x="772" y="521" width="1" height="6" fill="#ffff00"/>
<rect x="773" y="525" width="1" height="2" fill="#ffff00"/>
<rect x="774" y="525" width="1" height="2" fill="#ffff00"/>
<rect x="775" y="523" width="1" height="4" fill="#ffff00"/>
<rect x="776" y="521" width="1" height="3" fill="#ffff00"/>
<rect x="777" y="521" width="1" height="2" fill="#ffff00"/>
<rect x="778" y="522" width="1" height="5" fill="#ffff00"/>
<rect x="779" y="521" width="1" height="6" fill="#ffff00"/>
<rect x="780" y="517" width="1" height="5" fill="#ffff00"/>
<rect x="781" y="517" width="1" height="7" fill="#ffff00"/>
<rect x="782" y="521" width="1" height="3" fill="#ffff00"/>
<rect x="783" y="519" width="1" height="3" fill="#ffff00"/>
<rect x="784" y="519" width="1" height="7" fill="#ffff00"/>
<rect x="785" y="518" width="1" height="8" fill="#ffff00"/>
<rect x="786" y="518" width="1" height="6" fill="#ffff00"/>
<rect x="787" y="517" width="1" height="7" fill="#ffff00"/>
<rect x="788" y="517" width="1" height="4" fill="#ffff00"/>
<rect x="789" y="520" width="1" height="2" fill="#ffff00"/>
<rect x="790" y="519" width="1" height="3" fill="#ffff00"/>
<rect x="791" y="519" width="1" height="2" fill="#ffff00"/>
<rect x="792" y="520" width="1" height="3" fill="#ffff00"/>
<rect x="793" y="522" width="1" height="1" fill="#ffff00"/>
<rect x="794" y="522" width="1" height="2" fill="#ffff00"/>
<rect x="795" y="518" width="1" height="6" fill="#ffff00"/>
<rect x="796" y="518" width="1" height="2" fill="#ffff00"/>
<rect x="797" y="519" width="1" height="5" fill="#ffff00"/>
<rect x="798" y="522" width="1" height="2" fill="#ffff00"/>
<rect x="799" y="522" width="1" height="3" fill="#ffff00"/>
<rect x="800" y="521" width="1" height="4" fill="#ffff00"/>
<rect x="801" y="519" width="1" height="3" fill="#ffff00"/>
<rect x="802" y="519" width="1" height="4" fill="#ffff00"/>
<rect x="803" y="522" width="1" height="3" fill="#ffff00"/>
<rect x="804" y="521" width="1" height="4" fill="#ffff00"/>
<rect x="805" y="521" width="1" height="2" fill="#ffff00"/>
<rect x="806" y="521" width="1" height="2" fill="#ffff00"/>
<rect x="807" y="521" width="1" height="6" fill="#ffff00"/>
<rect x="808" y="521" width="1" height="6" fill="#ffff00"/>
<rect x="809" y="516" width="1" height="6" fill="#ffff00"/>
<rect x="810" y="516" width="1" height="1" fill="#ffff00"/>
<rect x="811" y="507" width="1" height="10" fill="#ffff00"/>
<rect x="812" y="498" width="1" height="10" fill="#ffff00"/>
<rect x="813" y="473" width="1" height="26" fill="#ffff00"/>
<rect x="814" y="412" width="1" height="62" fill="#ffff00"/>
<rect x="815" y="388" width="1" height="25" fill="#ffff00"/>
<rect x="816" y="388" width="1" height="4" fill="#ffff00"/>
<rect x="817" y="391" width="1" height="69" fill="#ffff00"/>
<rect x="818" y="459" width="1" height="41" fill="#ffff00"/>
<rect x="819" y="499" width="1" height="16" fill="#ffff00"/>
<rect x="820" y="514" width="1" height="9" fill="#ffff00"/>
<rect x="821" y="521" width="1" height="2" fill="#ffff00"/>
<rect x="822" y="521" width="1" height="1" fill="#ffff00"/>
<rect x="823" y="517" width="1" height="5" fill="#ffff00"/>
<rect x="824" y="517" width="1" height="3" fill="#ffff00"/>
<rect x="825" y="519" width="1" height="4" fill="#ffff00"/>
<rect x="826" y="522" width="1" height="3" fill="#ffff00"/>
<rect x="827" y="521" width="1" height="4" fill="#ffff00"/>
<rect x="828" y="521" width="1" height="5" fill="#ffff00"/>
<rect x="829" y="525" width="1" height="1" fill="#ffff00"/>
<rect x="830" y="521" width="1" height="5" fill="#ffff00"/>
<rect x="831" y="519" width="1" height="3" fill="#ffff00"/>
<rect x="832" y="519" width="1" height="6" fill="#ffff00"/>
<rect x="833" y="524" width="1" height="2" fill="#ffff00"/>
<rect x="834" y="525" width="1" height="2" fill="#ffff00"/>
<rect x="835" y="526" width="1" height="1" fill="#ffff00"/>
<rect x="836" y="517" width="1" height="10" fill="#ffff00"/>
<rect x="837" y="517" width="1" height="7" fill="#ffff00"/>
<rect x="838" y="523" width="1" height="4" fill="#ffff00"/>
<rect x="839" y="524" width="1" height="3" fill="#ffff00"/>
<rect x="840" y="522" width="1" height="3" fill="#ffff00"/>
<rect x="841" y="522" width="1" height="1" fill="#ffff00"/>
<rect x="842" y="522" width="1" height="1" fill="#ffff00"/>
<rect x="843" y="522" width="1" height="1" fill="#ffff00"/>
<rect x="844" y="518" width="1" height="5" fill="#ffff00"/>
<rect x="845" y="518" width="1" height="6" fill="#ffff00"/>
<rect x="846" y="523" width="1" height="4" fill="#ffff00"/>
<rect x="847" y="522" width="1" height="5" fill="#ffff00"/>
<rect x="848" y="517" width="1" height="6" fill="#ffff00"/>
<rect x="849" y="517" width="1" height="4" fill="#ffff00"/>
<rect x="850" y="518" width="1" height="3" fill="#ffff00"/>
<rect x="851" y="518" width="1" height="3" fill="#ffff00"/>
<rect x="852" y="520" width="1" height="4" fill="#ffff00"/>
<rect x="853" y="519" width="1" height="5" fill="#ffff00"/>
<rect x="854" y="518" width="1" height="2" fill="#ffff00"/>
<rect x="855" y="518" width="1" height="4" fill="#ffff00"/>
<rect x="856" y="521" width="1" height="5" fill="#ffff00"/>
<rect x="857" y="517" width="1" height="9" fill="#ffff00"/>
<rect x="858" y="517" width="1" height="2" fill="#ffff00"/>
<rect x="633" y="338" width="1" height="195" fill="#00ff00"/>
<text transform="translate(587,350) scale(1,1.2)" fill="#ff0000" stroke="#ff0000" class="d" text-anchor="start">512</text>
<text transform="translate(656,349) scale(1,1.14)" fill="#fff" class="ti">eu152/Clover1.GeC.4MeV.q0</text>
<text transform="translate(636,374) scale(1,1.2)" fill="#00ff00" stroke="#00ff00" class="d" text-anchor="start">775</text>
<text transform="translate(636,386) scale(1,1.2)" fill="#00ff00" stroke="#00ff00" class="d" text-anchor="start">779.866keV</text>
<text transform="translate(588,530) scale(1,1.2)" fill="#ff0000" stroke="#ff0000" class="d" text-anchor="start">0</text>
<text transform="translate(589,544) scale(1,1.2)" fill="#ff0000" stroke="#ff0000" class="d" text-anchor="start">1770</text>
<text transform="translate(620,544) scale(1,1.2)" fill="#00ff00" stroke="#00ff00" class="d" text-anchor="start">1825</text>
<text transform="translate(860,544) scale(1,1.2)" fill="#ff0000" stroke="#ff0000" class="d" text-anchor="end">2076</text>
<rect x="878" y="337" width="275" height="1" fill="#ff0000"/>
<rect x="878" y="533" width="275" height="1" fill="#ff0000"/>
<rect x="878" y="337" width="1" height="197" fill="#ff0000"/>
<rect x="1152" y="337" width="1" height="197" fill="#ff0000"/>
<rect x="878" y="412" width="1" height="121" fill="#ffff00"/>
<rect x="878" y="532" width="274" height="1" fill="#ffff00"/>
<text transform="translate(880,350) scale(1,1.2)" fill="#ff0000" stroke="#ff0000" class="d" text-anchor="start">262144</text>
<text transform="translate(950,349) scale(1,1.14)" fill="#fff" class="ti">eu152/Clover1.GeD.4MeV.q0</text>
<text transform="translate(881,529) scale(1,1.2)" fill="#ff0000" stroke="#ff0000" class="d" text-anchor="start">0</text>
<text transform="translate(881,544) scale(1,1.2)" fill="#ff0000" stroke="#ff0000" class="d" text-anchor="start">0</text>
<text transform="translate(1153,544) scale(1,1.2)" fill="#ff0000" stroke="#ff0000" class="d" text-anchor="end">8191</text></svg>
<div class="t" style="left:564px;top:558px;width:608px;text-align:center;font-size:10px;color:#f00;letter-spacing:0.2px;line-height:14px;">Your histograms are displayed here. Press the F1 key for more information.</div>
</body></html>
